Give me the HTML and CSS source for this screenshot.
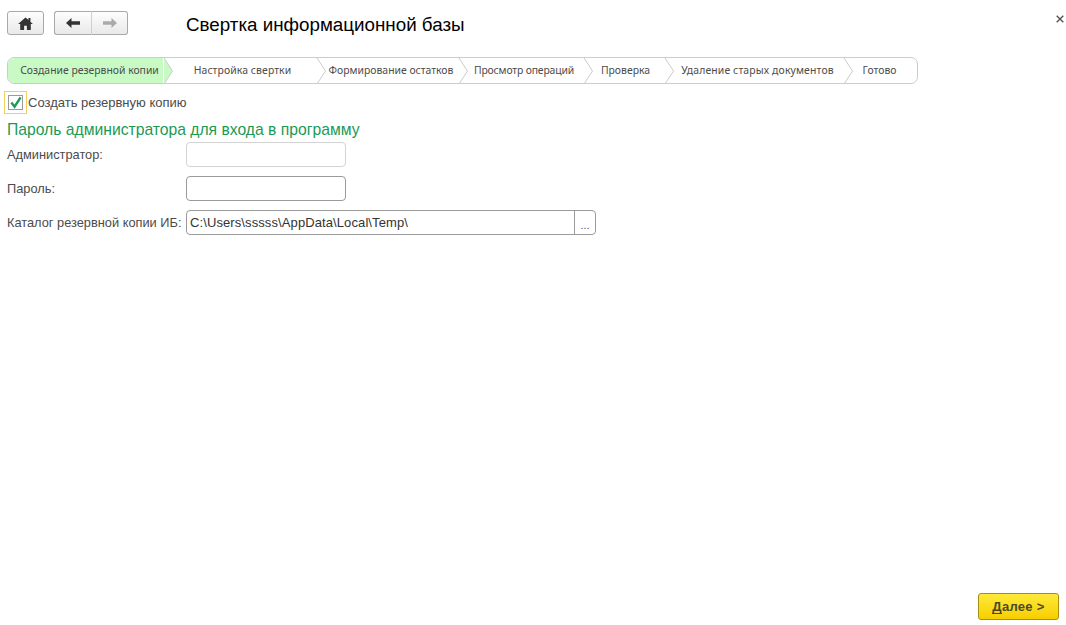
FILE: index.html
```html
<!DOCTYPE html>
<html lang="ru">
<head>
<meta charset="utf-8">
<title>Свертка информационной базы</title>
<link rel="stylesheet" href="styles.css">
</head>
<body>
<div class="page">
  <header class="header">
    <button class="tool home" type="button" aria-label="Начальная страница">
      <svg width="15" height="13" viewBox="0 0 16 14"><path fill="#333" d="M8 .5 0 7.6h2.300V14h4.200V9.500h3V14h4.200V7.600H16l-2.700-2.400V1.200h-2.100v2.100z"/></svg>
    </button>
    <div class="nav">
      <button class="tool back" type="button" aria-label="Назад">
        <svg width="14" height="10" viewBox="0 0 14 10"><path fill="#333" d="M5.500 0 0 5l5.500 5V6.700H14V3.300H5.500z"/></svg>
      </button>
      <button class="tool forward" type="button" aria-label="Вперед">
        <svg width="14" height="10" viewBox="0 0 14 10"><path fill="#aaa" d="M8.500 0 14 5l-5.500 5V6.700H0V3.300h8.500z"/></svg>
      </button>
    </div>
    <h1 class="title">Свертка информационной базы</h1>
    <svg class="close" width="8" height="8" viewBox="0 0 8 8"><path stroke="#555" stroke-width="1.400" d="M.7.7l6.600 6.600M7.300.7.7 7.300"/></svg>
  </header>

  <nav class="steps">
    <div class="step s1 active"><span>Создание резервной копии</span>
      <svg class="tip" width="9" height="26" viewBox="0 0 9 26"><path fill="#c9fac6" stroke="#ccc" d="M0 0l8.500 13L0 26"/></svg></div>
    <div class="step s2"><span>Настройка свертки</span>
      <svg class="tip" width="9" height="26" viewBox="0 0 9 26"><path fill="none" stroke="#ccc" d="M0 0l8.500 13L0 26"/></svg></div>
    <div class="step s3"><span>Формирование остатков</span>
      <svg class="tip" width="9" height="26" viewBox="0 0 9 26"><path fill="none" stroke="#ccc" d="M0 0l8.500 13L0 26"/></svg></div>
    <div class="step s4"><span>Просмотр операций</span>
      <svg class="tip" width="9" height="26" viewBox="0 0 9 26"><path fill="none" stroke="#ccc" d="M0 0l8.500 13L0 26"/></svg></div>
    <div class="step s5"><span>Проверка</span>
      <svg class="tip" width="9" height="26" viewBox="0 0 9 26"><path fill="none" stroke="#ccc" d="M0 0l8.500 13L0 26"/></svg></div>
    <div class="step s6"><span>Удаление старых документов</span>
      <svg class="tip" width="9" height="26" viewBox="0 0 9 26"><path fill="none" stroke="#ccc" d="M0 0l8.500 13L0 26"/></svg></div>
    <div class="step s7"><span>Готово</span></div>
  </nav>

  <main class="form">
    <label class="check-row">
      <span class="focus"><span class="box">
        <svg width="14" height="13" viewBox="0 0 14 13"><path fill="none" stroke="#1c9a5a" stroke-width="2.600" d="M2.500 6.500 6 11 12.500 1"/></svg>
      </span></span>
      <span class="check-text">Создать резервную копию</span>
    </label>
    <h2 class="group">Пароль администратора для входа в программу</h2>
    <div class="fields">
      <label class="label">Администратор:</label>
      <div class="input short disabled"></div>
      <label class="label">Пароль:</label>
      <div class="input short"></div>
      <label class="label">Каталог резервной копии ИБ:</label>
      <div class="input long"><span class="value">C:\Users\sssss\AppData\Local\Temp\</span><span class="pick">...</span></div>
    </div>
  </main>

  <footer class="footer">
    <button class="next" type="button"><span class="accel">Д</span>алее &gt;</button>
  </footer>
</div>
</body>
</html>
```
FILE: styles.css
```css
* { box-sizing: border-box; }
html, body { margin: 0; height: 100%; background: #fff; }
body { font-family: "Liberation Sans", Arial, sans-serif; color: #4b4b4b; overflow: hidden; }
.page { height: 625px; display: flex; flex-direction: column; padding: 0 7px 5px; }

.header { display: flex; align-items: center; height: 24px; margin-top: 11px; }
.tool {
  height: 24px; padding: 0; display: flex; align-items: center; justify-content: center;
  border: 1px solid #a9a9a9; border-radius: 3px;
  background: linear-gradient(#fdfdfd, #e9e9e9);
}
.home { width: 37px; }
.nav { display: flex; margin-left: 10px; }
.back { width: 38px; border-radius: 3px 0 0 3px; border-right-color: #cfcfcf; }
.forward { width: 36px; border-left: 0; border-radius: 0 3px 3px 0; }
.title { margin: 0 0 0 58px; font-size: 18.800px; font-weight: 400; color: #000; line-height: 24px; position: relative; top: 2px; }
.close { margin-left: auto; margin-right: -5px; position: relative; top: -4px; }

.steps {
  display: flex; width: 911px; height: 27px; margin-top: 22px;
  border: 1px solid #ccc; border-radius: 7px; background: #fff;
}
.step {
  position: relative; display: flex; align-items: center; justify-content: center;
  padding: 0 10px 2px 0; font-family: "Noto Sans", sans-serif; font-size: 10.400px; color: #4b4b4b; white-space: nowrap;
}
.tip { position: absolute; right: -1px; top: -.5px; overflow: visible; }
.active { border-radius: 6px 0 0 6px; padding-left: 9px; background-image: linear-gradient(#c9fac6, #c9fac6); background-size: calc(100% - 9px) 100%; background-repeat: no-repeat; }
.s1 { width: 164px; }
.s2 { width: 153px; letter-spacing: .1px; padding-right: 12px; }
.s3 { width: 142px; }
.s4 { width: 125px; letter-spacing: -.15px; padding-right: 11px; }
.s5 { width: 81px; padding-right: 14px; }
.s6 { width: 179px; letter-spacing: .15px; }
.s7 { width: 65px; }

.form { display: flex; flex-direction: column; }
.check-row { display: flex; align-items: center; height: 23px; margin: 7px 0 0 -3px; }
.focus {
  width: 23px; height: 23px; display: flex; align-items: center; justify-content: center;
  border: 1px solid #f2cf63; flex: none;
}
.box {
  width: 15px; height: 15px; border: 1px solid #9a9a9a; display: flex; align-items: center; justify-content: center;
  background: #fff;
}
.check-text { margin-left: 1px; font-size: 13px; }
.group { margin: 5px 0 0; font-size: 15.700px; line-height: 21px; font-weight: 400; color: #1a9a55; }
.fields {
  display: grid; grid-template-columns: 179px auto; justify-content: start; align-items: center;
  row-gap: 9px; margin-top: 2px;
}
.label { font-size: 12.800px; }
.input { height: 25px; border: 1px solid #9a9a9a; border-radius: 4px; background: #fff; }
.short { width: 160px; }
.disabled { border-color: #d4d4d4; }
.long { width: 410px; display: flex; align-items: center; justify-content: space-between; font-size: 13px; color: #333; }
.value { padding-left: 3px; letter-spacing: .1px; }
.pick { width: 21px; height: 100%; border-left: 1px solid #9a9a9a; font-size: 11px; display: flex; align-items: flex-end; justify-content: center; padding-bottom: 3px; color: #555; }

.footer { margin-top: auto; display: flex; justify-content: flex-end; }
.next {
  width: 81px; height: 27px; padding: 0;
  border: 1px solid #a98f10; border-radius: 3px;
  background: linear-gradient(#ffe93a, #f7cf00);
  font-family: "Liberation Sans", Arial, sans-serif; font-size: 13px; font-weight: 700; color: #4a4a2a; letter-spacing: .3px;
}
.accel { display: inline-block; line-height: 13px; border-bottom: 1px solid #4a4a2a; }
```
